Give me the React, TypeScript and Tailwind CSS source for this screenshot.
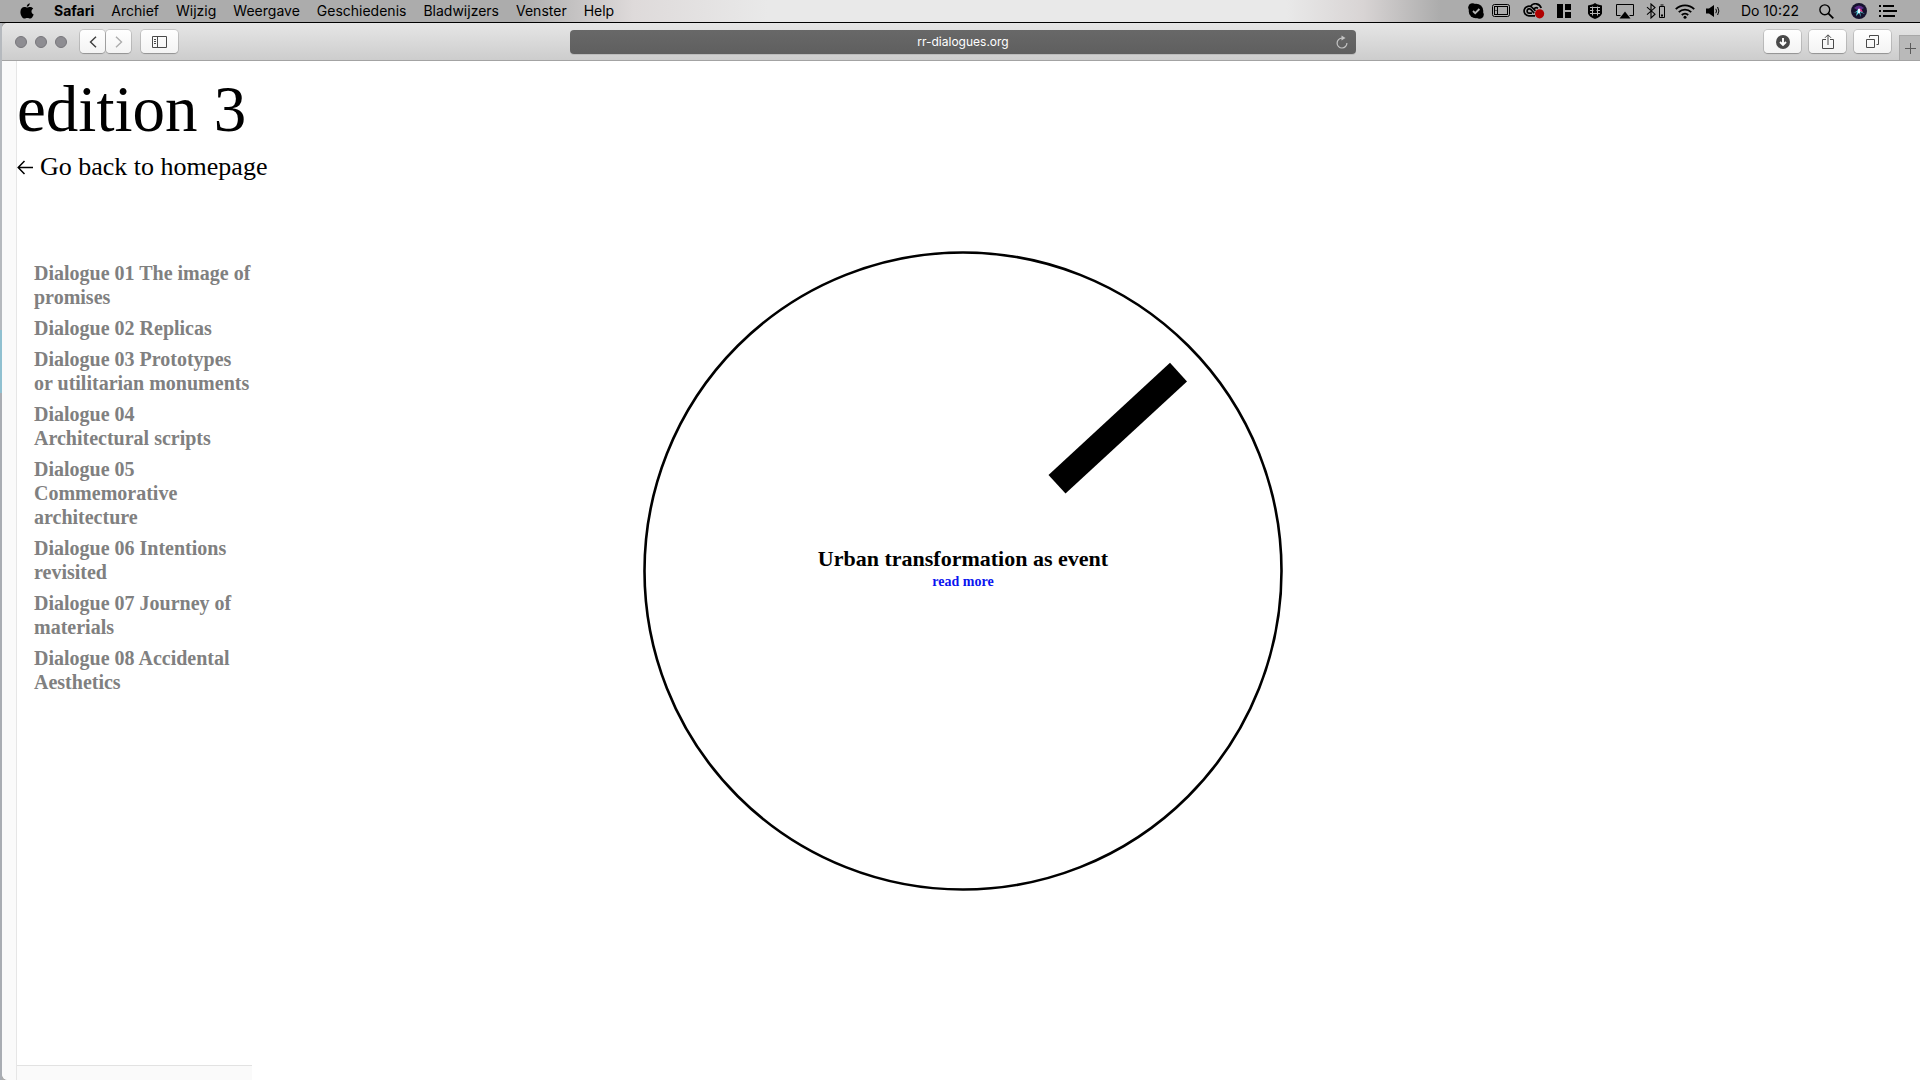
import type { ReactNode } from "react";

const menus = ["Archief", "Wijzig", "Weergave", "Geschiedenis", "Bladwijzers", "Venster", "Help"];

const dialogues = [
  "Dialogue 01 The image of promises",
  "Dialogue 02 Replicas",
  "Dialogue 03 Prototypes or utilitarian monuments",
  "Dialogue 04 Architectural scripts",
  "Dialogue 05 Commemorative architecture",
  "Dialogue 06 Intentions revisited",
  "Dialogue 07 Journey of materials",
  "Dialogue 08 Accidental Aesthetics",
];

function ToolButton({ label, className, children }: { label: string; className: string; children: ReactNode }) {
  return (
    <button
      type="button"
      aria-label={label}
      className={`flex h-[23px] items-center justify-center rounded bg-linear-to-b from-white to-[#f3f3f3] text-[#4a4a4a] shadow-[0_0_0_1px_rgba(0,0,0,0.12),0_1px_1px_rgba(0,0,0,0.2)] ${className}`}
    >
      {children}
    </button>
  );
}

function StatusIcons() {
  return (
    <>
      {/* Skype */}
      <svg width="16" height="16" viewBox="0 0 16 16">
        <circle cx="8" cy="8" r="7.3" />
        <circle cx="4.5" cy="4.5" r="4.3" />
        <circle cx="11.5" cy="11.5" r="4.3" />
        <path d="M5 8l2.2 2.2L11.4 6" fill="none" stroke="#b4b4b4" strokeWidth="1.8" />
      </svg>
      {/* Tablet */}
      <svg width="18" height="14" viewBox="0 0 18 14" className="ml-2" fill="none" stroke="#000">
        <rect x="0.5" y="0.5" width="17" height="12" rx="2" />
        <rect x="2.5" y="2.5" width="13" height="8" />
        <path d="M5.5 3v7M3.5 6.5h1" />
      </svg>
      {/* Creative Cloud with alert dot */}
      <svg width="22" height="16" viewBox="0 0 22 16" className="ml-[13px]" fill="none" stroke="#000" strokeWidth="1.7">
        <path d="M12 12.8H6a4.8 4.8 0 1 1 3.2-8.3l3.2 3.4" />
        <path d="M9 10.2H6.2a2.2 2.2 0 1 1 1.6-3.8l3.4 3.8" />
        <path d="M7.5 3.4A6 6 0 0 1 18.2 5M11 6a3 3 0 0 1 4-.8" />
        <circle cx="16.6" cy="10.8" r="4.6" fill="#b00000" stroke="none" />
      </svg>
      {/* Window layout */}
      <svg width="14" height="14" viewBox="0 0 14 14" className="ml-3">
        <path d="M0 0h6v14H0zM8 0h6v6H8zM8 8h6v6H8z" />
      </svg>
      {/* Shield */}
      <svg width="14" height="16" viewBox="0 0 14 16" className="ml-[17px]">
        <path d="M7 0l2 1.200L14 2.500v8Q12.500 14 7 16 1.500 14 0 10.500v-8L5 1.200z" />
        <path d="M2 4.500h10M2 7.500h3.500M8.500 7.500H12M2 10.500h10M4.500 3.500v9M9.500 3.500v9" stroke="#b4b4b4" fill="none" />
      </svg>
      {/* AirPlay */}
      <svg width="18" height="15" viewBox="0 0 18 15" className="ml-[14px]">
        <path d="M4.500 11.500h-4v-11h17v11h-4" fill="none" stroke="#000" />
        <path d="M9 7.500l5.500 7h-11z" />
      </svg>
      {/* Bluetooth and battery */}
      <svg width="20" height="16" viewBox="0 0 20 16" className="ml-3" fill="none" stroke="#000">
        <path d="M1 4.200l8 7-4 3.800V1l4 3.600-8 7" strokeWidth="1.100" />
        <path d="M13.500 3.500h5v11h-5zM14.500 2h3" />
        <path d="M15 12.500h2" strokeWidth="2" />
      </svg>
      {/* Wi-Fi */}
      <svg width="20" height="15" viewBox="0 0 20 15" className="ml-[9px]" fill="none" stroke="#000" strokeWidth="1.900">
        <path d="M.8 5.200a13 13 0 0 1 18.400 0M3.800 8.200a8.800 8.800 0 0 1 12.400 0M6.800 11a4.600 4.600 0 0 1 6.400 0" />
        <circle cx="10" cy="13.300" r="1.500" fill="#000" stroke="none" />
      </svg>
      {/* Volume */}
      <svg width="14" height="14" viewBox="0 0 14 14" className="ml-[11px]">
        <path d="M0 4.500h3L8 1v12L3 9.500H0z" />
        <path d="M9.800 4.800q1.400 2.200 0 4.400M11.600 3q2.600 4 0 8" fill="none" stroke="#000" />
      </svg>
    </>
  );
}

function MenuBar() {
  return (
    <header className="flex h-[22px] items-center bg-[linear-gradient(90deg,#acacac_27%,#dedada_33%,#e9e9e9_40%,#e9e9e9_67%,#d8d4d4_71%,#acacac_75%)] pl-5 pr-[23px] font-[Inter,sans-serif] text-sm leading-5">
      <svg width="14" height="16" viewBox="0 0 14 16" aria-label="Apple">
        <path d="M9.800.2c.1 1.900-1.400 3.500-3 3.500C6.600 2 8.100.4 9.800.2zM7.200 4.600c.7 0 1.500-.7 3-.7 1.300 0 2.400.7 3 1.600-2.500 1.500-2.100 4.900.5 5.900-.6 1.700-2 4.200-3.500 4.200-1.100 0-1.500-.7-2.900-.7s-1.800.7-2.900.7C2.600 15.600.4 12.200.4 8.900c0-3.200 2-4.900 4-4.900 1.300 0 2.200.6 2.800.6z" />
      </svg>
      <nav className="ml-5 flex gap-[17px]">
        <button type="button" className="font-bold">Safari</button>
        {menus.map((m) => (
          <button type="button" key={m}>{m}</button>
        ))}
      </nav>
      <div className="ml-auto flex items-center">
        <StatusIcons />
        <time className="ml-[21px]">Do 10:22</time>
        <svg width="15" height="15" viewBox="0 0 15 15" className="ml-5" fill="none" stroke="#000" strokeWidth="1.400">
          <circle cx="5.800" cy="5.800" r="4.900" />
          <path d="M9.300 9.300l5 5" strokeWidth="1.800" />
        </svg>
        {/* Siri */}
        <svg width="16" height="16" viewBox="0 0 16 16" className="ml-[17px]">
          <circle cx="8" cy="8" r="8" fill="#15122e" />
          <path d="M3 5q5-5 10 0L8 8z" fill="#5b2a86" />
          <path d="M2 10q4-1 6-5 2 4 6 6-3-1-5-2l1 5-2-4-3 3 1-4z" fill="#5fd4e0" />
          <path d="M8 5q3 1 4 4L8 8z" fill="#e03a8c" />
          <path d="M7 6l2 0 0 4-2 0z" fill="#e8f4ff" />
        </svg>
        <svg width="18" height="12" viewBox="0 0 18 12" className="ml-3">
          <path d="M0 0h2v2H0zM0 5h2v2H0zM0 10h2v2H0zM4 0h11v2H4zM4 5h14v2H4zM4 10h12v2H4z" />
        </svg>
      </div>
    </header>
  );
}

function Toolbar() {
  return (
    <div className="flex h-[38px] items-center justify-between rounded-tl-md border-b border-[#a3a3a3] bg-linear-to-b from-[#e6e6e6] to-[#cdcdcd]">
      <div className="flex flex-1 items-center pl-1">
        <div className="ml-[9px] flex gap-2">
          <span className="size-3 rounded-full border border-[#77767b] bg-[#8e8d92]" />
          <span className="size-3 rounded-full border border-[#77767b] bg-[#8e8d92]" />
          <span className="size-3 rounded-full border border-[#77767b] bg-[#8e8d92]" />
        </div>
        <div className="ml-[13px] flex gap-px">
          <ToolButton label="Back" className="w-[25px]">
            <svg width="8" height="12" viewBox="0 0 8 12" fill="none" stroke="#3d3d3d" strokeWidth="1.400"><path d="M7 .7L1.500 6 7 11.300" /></svg>
          </ToolButton>
          <ToolButton label="Forward" className="w-[25px]">
            <svg width="8" height="12" viewBox="0 0 8 12" fill="none" stroke="#acacac" strokeWidth="1.400"><path d="M1 .7L6.500 6 1 11.300" /></svg>
          </ToolButton>
        </div>
        <ToolButton label="Sidebar" className="ml-[10px] w-[37px]">
          <svg width="15" height="12" viewBox="0 0 15 12" fill="none" stroke="currentColor">
            <path d="M.5.5h14v11H.5zM5.500.5v11M2 3.500h2M2 5.500h2M2 7.500h2" />
          </svg>
        </ToolButton>
      </div>
      <div className="flex h-6 w-[41%] items-center rounded bg-linear-to-b from-[#686868] to-[#5f5f5f] px-2 shadow-[0_1px_0_#bcbcbc]">
        <input
          aria-label="Address"
          defaultValue="rr-dialogues.org"
          className="ml-3 min-w-0 flex-1 bg-transparent text-center font-[Inter,sans-serif] text-xs text-white outline-none"
        />
        <button type="button" aria-label="Reload">
          <svg width="12" height="14" viewBox="0 0 12 14" fill="none" stroke="#c4c4c4" strokeWidth="1.200">
            <path d="M6 3.200A4.900 4.900 0 1 0 10.900 8" />
            <path d="M5.500.5v5L9.500 3z" fill="#c4c4c4" stroke="none" />
          </svg>
        </button>
      </div>
      <div className="flex flex-1 items-center justify-end self-stretch">
        <ToolButton label="Downloads" className="w-[37px]">
          <svg width="14" height="14" viewBox="0 0 14 14">
            <circle cx="7" cy="7" r="7" fill="#4a4a4a" />
            <path d="M7 3v6.500M4 7l3 3 3-3" fill="none" stroke="#fff" strokeWidth="1.900" />
          </svg>
        </ToolButton>
        <ToolButton label="Share" className="ml-2 w-[37px]">
          <svg width="12" height="16" viewBox="0 0 12 16" fill="none" stroke="currentColor">
            <path d="M4 5.500H.5v9h11v-9H8M6 11V1M3 3.800L6 .8l3 3" />
          </svg>
        </ToolButton>
        <ToolButton label="Tabs" className="ml-2 w-[37px]">
          <svg width="13" height="13" viewBox="0 0 13 13" fill="none" stroke="currentColor">
            <path d="M.5 4.500h8v8h-8zM3.500 2.500v-2h9v9h-2" />
          </svg>
        </ToolButton>
        <button type="button" aria-label="New tab" className="ml-2 flex h-[25px] w-[21px] items-center justify-center self-end border-l border-t border-[#a8a8a8] bg-[#b9b9b9]">
          <svg width="11" height="11" viewBox="0 0 11 11" stroke="#5a5a5a"><path d="M5.500 0v11M0 5.500h11" /></svg>
        </button>
      </div>
    </div>
  );
}

export default function App() {
  return (
    <div className="flex min-h-screen flex-col bg-[#acacac] text-black">
      <MenuBar />
      <div className="flex flex-1 border-t border-black">
        {/* Sliver of the desktop behind the window */}
        <div className="w-[2px] bg-[linear-gradient(#b5b9be_29%,#8fc0d0_29%,#8fc0d0_35%,#a9adb3_35%)]" />
        <div className="flex flex-1 flex-col rounded-l-md bg-white">
          <Toolbar />
          <div className="flex flex-1 font-['Liberation_Serif',serif]">
            <div className="w-[15px] rounded-bl-md border-r border-[#e6e6e6] bg-[#fafafa]" />
            <main className="grid flex-1 grid-cols-[1fr_auto_1fr] pr-[11px]">
              <aside className="flex flex-col">
                <h1 className="mt-[11px] text-[65px] leading-[74px]">edition 3</h1>
                <a href="/" className="mt-[3px] flex items-center gap-[7px] text-[26px] leading-[36px]">
                  <svg width="16" height="16" viewBox="0 0 16 16" fill="none" stroke="#000" strokeWidth="1.500">
                    <path d="M16 8.500H1.500M7.500 2L1.200 8.500l6.300 6.500" />
                  </svg>
                  Go back to homepage
                </a>
                <nav className="mt-[76px] flex w-[235px] flex-col gap-[7px] pl-[17px] text-xl leading-6 font-bold text-[#808080]">
                  {dialogues.map((d) => (
                    <a href="#" key={d}>{d}</a>
                  ))}
                </nav>
                <div className="mt-auto h-[15px] w-[235px] border-t border-[#e2e2e2] bg-[#fafafa]" />
              </aside>
              <section className="mt-[190px] grid size-[640px] place-items-center">
                <svg viewBox="0 0 640 640" className="col-start-1 row-start-1 size-full">
                  <circle cx="320" cy="320" r="318.500" fill="none" stroke="#000" strokeWidth="2.600" />
                  <path d="M527 111.700l17 18.700L422.500 242.500l-17-18.500z" />
                </svg>
                <div className="z-10 col-start-1 row-start-1 pb-1 text-center font-bold">
                  <h2 className="mb-px text-[22px] leading-6">Urban transformation as event</h2>
                  <a href="#" className="block text-sm leading-5 text-[#0a14f0]">read more</a>
                </div>
              </section>
            </main>
          </div>
        </div>
      </div>
    </div>
  );
}
